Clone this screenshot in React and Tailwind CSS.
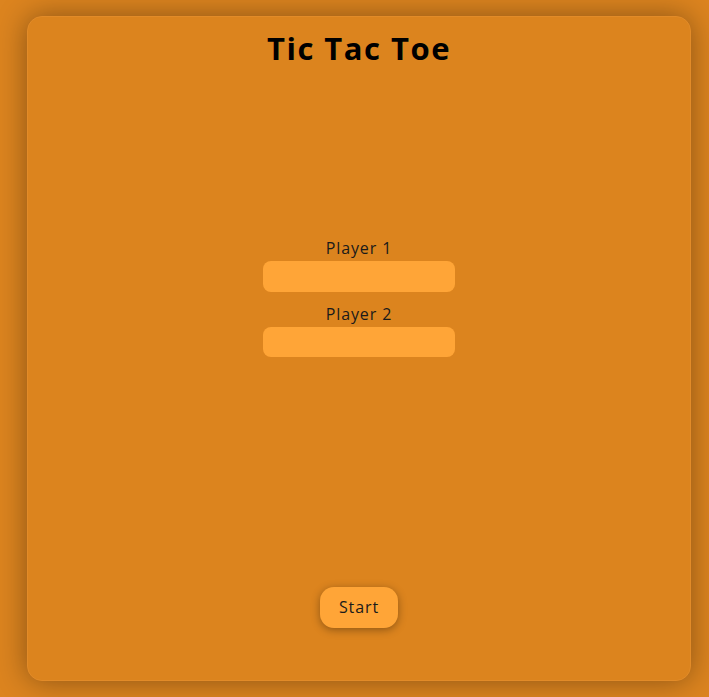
export default function App() {
  return (
    <div className="h-[697px] w-[709px] overflow-hidden bg-[#dc841f] pt-4 pl-[27px]" style={{ fontFamily: '"Open Sans", sans-serif' }}>
      <div className="flex h-[665px] w-[664px] flex-col items-center rounded-[15px] border border-[#e28b28] bg-[#dc841e] shadow-[0_0_30px_rgba(0,0,0,0.38)]">
        <h1 className="mt-[11px] text-[31px] font-bold leading-[40px] tracking-[1.5px] text-black">Tic Tac Toe</h1>
        <div className="mt-[169px] flex flex-col items-center">
          <label className="text-[16px] leading-[22px] tracking-[0.9px] text-[#1a1a1a]">Player 1</label>
          <input className="mt-[2px] h-[31px] w-[192px] rounded-[8px] bg-[#ffa537] outline-none" />
          <label className="mt-[11px] text-[16px] leading-[22px] tracking-[0.9px] text-[#1a1a1a]">Player 2</label>
          <input className="mt-[2px] h-[30px] w-[192px] rounded-[8px] bg-[#ffa537] outline-none" />
        </div>
        <button className="mt-[230px] h-[41px] w-[78px] rounded-[14px] bg-[#ffa537] pb-[2px] text-[16px] tracking-[0.9px] text-[#1a1a1a] shadow-[0_2px_8px_rgba(0,0,0,0.35)]">Start</button>
      </div>
    </div>
  );
}
